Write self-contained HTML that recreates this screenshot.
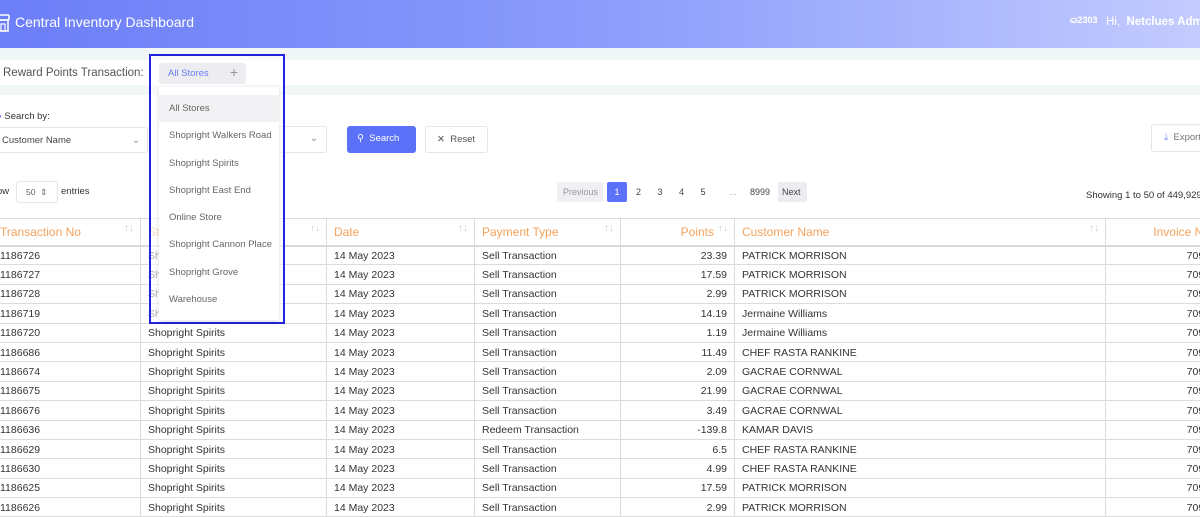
<!DOCTYPE html>
<html><head><meta charset="utf-8"><style>
*{box-sizing:border-box;margin:0;padding:0}
body{width:1200px;height:500px;overflow:hidden;background:#fff;font-family:"Liberation Sans",sans-serif;position:relative;color:#333}
.a{position:absolute}
.hdr{left:0;top:0;width:1200px;height:48px;background:linear-gradient(90deg,#6c7ef8 0%,#8b9cfb 50%,#c3cbfe 100%)}
table{position:absolute;left:-8px;top:218px;border-collapse:collapse;font-size:10.5px;table-layout:fixed;width:1263px}
td,th{border:1px solid #dcdcdc;height:19.4px;padding:1px 7px 0;white-space:nowrap;overflow:hidden}
th{height:27px;color:#f7a35c;font-weight:normal;font-size:12px;text-align:left;position:relative;border-bottom:2px solid #d8d8d8}
th .s{position:absolute;right:6px;top:4px;color:#ccc;font-size:10px}
.r{text-align:right}
.menu div{height:27.3px;line-height:27.3px;padding-left:10px;font-size:9.5px;color:#666}
</style></head><body>
<div class="a hdr"></div>
<svg class="a" style="left:-4px;top:13px" width="14" height="20" viewBox="0 0 14 20"><rect x="1" y="2" width="12" height="5" rx="1" fill="none" stroke="#fff" stroke-width="1.5"/><rect x="2" y="7" width="10" height="11" fill="none" stroke="#fff" stroke-width="1.5"/><rect x="5" y="11" width="4" height="7" fill="none" stroke="#fff" stroke-width="1.2"/></svg>
<div class="a" style="left:15px;top:14px;color:#fff;font-size:14px">Central Inventory Dashboard</div>
<div class="a" style="left:1070px;top:15px;color:#fff;font-size:9px;font-weight:bold">⛀2303</div>
<div class="a" style="left:1106px;top:16px;color:#fff;font-size:11.5px;white-space:nowrap">Hi, &nbsp;<b>Netclues Admin</b></div>
<div class="a" style="left:0;top:48px;width:1200px;height:12px;background:#f1f6f6"></div>
<div class="a" style="left:0;top:85px;width:1200px;height:10px;background:#f1f6f6"></div>
<div class="a" style="left:3px;top:67px;font-size:11.5px;color:#555">Reward Points Transaction:</div>
<div class="a" style="left:-4px;top:111px;font-size:9.5px;color:#333"><span style="color:#5a6ef7">●</span> Search by:</div>
<div class="a" style="left:-4px;top:127px;width:152px;height:26px;border:1px solid #e6e6e6;border-radius:3px;font-size:9.5px;color:#444;padding:7px 5px">Customer Name<span style="position:absolute;right:7px;color:#888">⌄</span></div>
<div class="a" style="left:270px;top:126px;width:57px;height:27px;border:1px solid #e6e6e6;border-radius:3px;font-size:9.5px;color:#888;padding:6px 8px;text-align:right">⌄</div>
<div class="a" style="left:347px;top:126px;width:69px;height:27px;background:#5b72f8;border-radius:3px;color:#fff;font-size:9.5px;padding:7px 0 0 10px">⚲ &nbsp;Search</div>
<div class="a" style="left:425px;top:126px;width:63px;height:27px;border:1px solid #e6e6e6;border-radius:3px;color:#555;font-size:9.5px;padding:7px 0 0 11px">✕ &nbsp;Reset</div>
<div class="a" style="left:1151px;top:124px;width:60px;height:28px;border:1px solid #e6e6e6;border-radius:3px;color:#777;font-size:9.5px;padding:7px 0 0 12px"><span style="color:#7a8cf8">⤓</span> &nbsp;Export</div>
<div class="a" style="left:-3px;top:186px;font-size:9.5px;color:#333">ow</div>
<div class="a" style="left:16px;top:181px;width:42px;height:22px;border:1px solid #e6e6e6;border-radius:3px;font-size:8.5px;color:#666;padding:5px 0 0 9px">50 &nbsp;⇕</div>
<div class="a" style="left:61px;top:186px;font-size:9.5px;color:#333">entries</div>
<div class="a" style="left:557px;top:182px;width:46px;height:20px;background:#f0f0f4;font-size:9px;color:#999;padding:5px 0 0 6px">Previous</div>
<div class="a" style="left:607px;top:182px;width:20px;height:20px;background:#5b72f8;color:#fff;font-size:9px;text-align:center;padding-top:5px;border-radius:2px">1</div>
<div class="a" style="left:636px;top:187px;font-size:9px;color:#444;word-spacing:14px">2 3 4 5</div>
<div class="a" style="left:729px;top:187px;font-size:9px;color:#aaa">...</div>
<div class="a" style="left:750px;top:187px;font-size:9px;color:#444">8999</div>
<div class="a" style="left:778px;top:182px;width:29px;height:20px;background:#ececf2;font-size:9px;color:#444;padding:5px 0 0 4px">Next</div>
<div class="a" style="left:1086px;top:190px;font-size:9.5px;color:#333;white-space:nowrap">Showing 1 to 50 of 449,929 entries</div>
<table>
<colgroup><col style="width:148px"><col style="width:186px"><col style="width:148px"><col style="width:146px"><col style="width:114px"><col style="width:371px"><col style="width:150px"></colgroup>
<tr><th>Transaction No<span class="s">↑↓</span></th><th>Store<span class="s">↑↓</span></th><th>Date<span class="s">↑↓</span></th><th>Payment Type<span class="s">↑↓</span></th><th class="r" style="padding-right:20px">Points<span class="s">↑↓</span></th><th>Customer Name<span class="s">↑↓</span></th><th class="r" style="padding-right:45px">Invoice No</th></tr>
<tr><td>1186726</td><td>Shopright Spirits</td><td>14 May 2023</td><td>Sell Transaction</td><td class="r">23.39</td><td>PATRICK MORRISON</td><td class="r" style="padding-right:45px">7095</td></tr>
<tr><td>1186727</td><td>Shopright Spirits</td><td>14 May 2023</td><td>Sell Transaction</td><td class="r">17.59</td><td>PATRICK MORRISON</td><td class="r" style="padding-right:45px">7095</td></tr>
<tr><td>1186728</td><td>Shopright Spirits</td><td>14 May 2023</td><td>Sell Transaction</td><td class="r">2.99</td><td>PATRICK MORRISON</td><td class="r" style="padding-right:45px">7095</td></tr>
<tr><td>1186719</td><td>Shopright Spirits</td><td>14 May 2023</td><td>Sell Transaction</td><td class="r">14.19</td><td>Jermaine Williams</td><td class="r" style="padding-right:45px">7095</td></tr>
<tr><td>1186720</td><td>Shopright Spirits</td><td>14 May 2023</td><td>Sell Transaction</td><td class="r">1.19</td><td>Jermaine Williams</td><td class="r" style="padding-right:45px">7095</td></tr>
<tr><td>1186686</td><td>Shopright Spirits</td><td>14 May 2023</td><td>Sell Transaction</td><td class="r">11.49</td><td>CHEF RASTA RANKINE</td><td class="r" style="padding-right:45px">7095</td></tr>
<tr><td>1186674</td><td>Shopright Spirits</td><td>14 May 2023</td><td>Sell Transaction</td><td class="r">2.09</td><td>GACRAE CORNWAL</td><td class="r" style="padding-right:45px">7095</td></tr>
<tr><td>1186675</td><td>Shopright Spirits</td><td>14 May 2023</td><td>Sell Transaction</td><td class="r">21.99</td><td>GACRAE CORNWAL</td><td class="r" style="padding-right:45px">7095</td></tr>
<tr><td>1186676</td><td>Shopright Spirits</td><td>14 May 2023</td><td>Sell Transaction</td><td class="r">3.49</td><td>GACRAE CORNWAL</td><td class="r" style="padding-right:45px">7095</td></tr>
<tr><td>1186636</td><td>Shopright Spirits</td><td>14 May 2023</td><td>Redeem Transaction</td><td class="r">-139.8</td><td>KAMAR DAVIS</td><td class="r" style="padding-right:45px">7095</td></tr>
<tr><td>1186629</td><td>Shopright Spirits</td><td>14 May 2023</td><td>Sell Transaction</td><td class="r">6.5</td><td>CHEF RASTA RANKINE</td><td class="r" style="padding-right:45px">7095</td></tr>
<tr><td>1186630</td><td>Shopright Spirits</td><td>14 May 2023</td><td>Sell Transaction</td><td class="r">4.99</td><td>CHEF RASTA RANKINE</td><td class="r" style="padding-right:45px">7095</td></tr>
<tr><td>1186625</td><td>Shopright Spirits</td><td>14 May 2023</td><td>Sell Transaction</td><td class="r">17.59</td><td>PATRICK MORRISON</td><td class="r" style="padding-right:45px">7095</td></tr>
<tr><td>1186626</td><td>Shopright Spirits</td><td>14 May 2023</td><td>Sell Transaction</td><td class="r">2.99</td><td>PATRICK MORRISON</td><td class="r" style="padding-right:45px">7095</td></tr>
</table>
<div class="a" style="left:149px;top:54px;width:136px;height:270px;border:2px solid #2222dd;background:rgba(255,255,255,0.6)"></div>
<div class="a" style="left:159px;top:63px;width:87px;height:21px;background:#ececf1;border-radius:3px;font-size:9.5px;color:#6a7cf6;padding:5px 0 0 9px">All Stores<span style="position:absolute;right:8px;top:1px;color:#999;font-size:14px">+</span></div>
<div class="a menu" style="left:159px;top:87px;width:120px;height:233px;background:#fff;box-shadow:0 2px 6px rgba(0,0,0,0.12);border-radius:3px;padding-top:8px">
<div style="background:#f2f2f4">All Stores</div><div>Shopright Walkers Road</div><div>Shopright Spirits</div><div>Shopright East End</div><div>Online Store</div><div>Shopright Cannon Place</div><div>Shopright Grove</div><div>Warehouse</div>
</div>
</body></html>
